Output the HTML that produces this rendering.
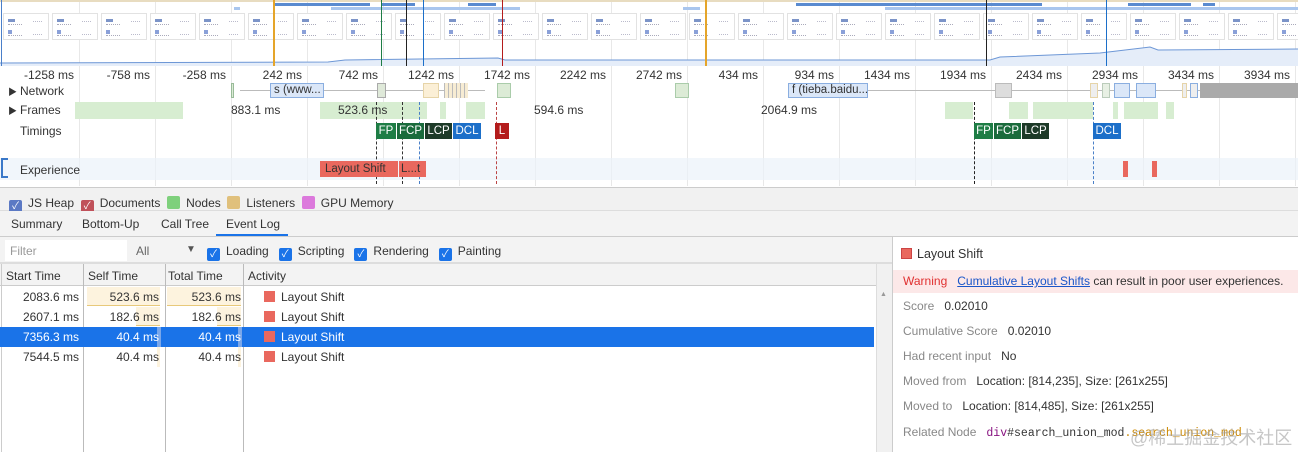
<!DOCTYPE html>
<html><head><meta charset="utf-8"><style>
*{box-sizing:border-box;margin:0;padding:0}
body{width:1298px;height:452px;overflow:hidden;background:#fff;font-family:"Liberation Sans","Noto Sans CJK SC",sans-serif;font-size:12px;color:#333;position:relative}
.a{position:absolute}
.th{position:absolute;top:13px;width:46px;height:27px;border:1px solid #e2e2e2;background:#fff}
.th i{position:absolute;left:4px;top:5px;width:7px;height:3px;background:#7c94c8}
.th b{position:absolute;left:4px;top:10px;width:14px;height:12px;border-top:1px dotted #aab;border-bottom:1px dotted #aab}
.th u{position:absolute;right:6px;top:7px;width:9px;height:14px;border-top:1px dotted #bbc;border-bottom:1px dotted #bbc}
.th s{position:absolute;left:4px;top:16px;width:4px;height:4px;background:#8aa0d8}
.gl{position:absolute;top:0;height:186px;width:1px;background:#e8e8e8}
.rl{position:absolute;top:68px;font-size:12px;color:#333;text-align:right;width:70px}
.mk{position:absolute;top:123px;height:16px;color:#fff;font-size:11.5px;line-height:16px;text-align:center}
.cb{display:inline-block;width:13px;height:13px;border-radius:2px;background:#1a73e8;color:#fff;font-size:10px;line-height:13px;text-align:center;vertical-align:-2px;margin-right:6px}
.row{position:absolute;left:0;width:874px;height:20px;line-height:20px}
.c{position:absolute;top:0;text-align:right}
.sq{position:absolute;left:264px;top:4px;width:11px;height:11px;background:#e9685e}
.k{color:#888}
.nb{position:absolute;top:83px;height:15px}
.fr{position:absolute;top:102px;height:17px;background:#d7edd1}
.dl{position:absolute;top:102px;height:82px}
</style></head><body>
<div id="grid"></div>
<!-- overview -->
<div class="a" style="left:0;top:65px;width:1298px;height:1px;background:#ccc"></div>
<div class="a" style="left:0;top:0;width:1298px;height:2px;background:#e8dcc0"></div>
<div class="a" style="left:274px;top:3px;width:96px;height:3px;background:#5a8bd0"></div>
<div class="a" style="left:381px;top:3px;width:34px;height:3px;background:#5a8bd0"></div>
<div class="a" style="left:468px;top:3px;width:28px;height:3px;background:#5a8bd0"></div>
<div class="a" style="left:796px;top:3px;width:246px;height:3px;background:#5a8bd0"></div>
<div class="a" style="left:1128px;top:3px;width:63px;height:3px;background:#5a8bd0"></div>
<div class="a" style="left:1203px;top:3px;width:12px;height:3px;background:#5a8bd0"></div>
<div class="a" style="left:234px;top:7px;width:6px;height:3px;background:#a9c6ee"></div>
<div class="a" style="left:331px;top:7px;width:189px;height:3px;background:#a9c6ee"></div>
<div class="a" style="left:683px;top:7px;width:17px;height:3px;background:#a9c6ee"></div>
<div class="a" style="left:885px;top:7px;width:413px;height:3px;background:#a9c6ee"></div>
<div id="thumbs"></div>
<svg class="a" style="left:0;top:40px" width="1298" height="26"><path d="M0 23 L328 22 L345 20 L498 18 L505 20 L990 20 L1000 17 L1100 13 L1150 7 L1158 10 L1298 9 L1298 26 L0 26Z" fill="#e5edf9"/><path d="M0 23 L328 22 L345 20 L498 18 L505 20 L990 20 L1000 17 L1100 13 L1150 7 L1158 10 L1298 9" fill="none" stroke="#6d97d6" stroke-width="1"/></svg>
<div class="a" style="left:273px;top:0;width:2px;height:66px;background:#e5a52a"></div>
<div class="a" style="left:705px;top:0;width:2px;height:66px;background:#e5a52a"></div>
<div class="a" style="left:381px;top:0;width:1px;height:66px;background:#1e7d45"></div>
<div class="a" style="left:406px;top:0;width:1px;height:66px;background:#222"></div>
<div class="a" style="left:423px;top:0;width:1px;height:66px;background:#1c6fc9"></div>
<div class="a" style="left:502px;top:0;width:1px;height:66px;background:#b41c1c"></div>
<div class="a" style="left:986px;top:0;width:1px;height:66px;background:#222"></div>
<div class="a" style="left:1106px;top:0;width:1px;height:66px;background:#1c6fc9"></div>
<div class="a" style="left:1px;top:0;width:1px;height:66px;background:#4a7fc9"></div>

<!-- timeline -->
<div class="a" style="left:0;top:158px;width:1298px;height:22px;background:rgba(235,242,250,0.7)"></div>
<div class="a" style="left:1px;top:158px;width:7px;height:20px;border:2px solid #3a78c8;border-right:none"></div>
<div class="a" style="left:8px;top:85px;font-size:9px">▶</div><div class="a" style="left:20px;top:84px">Network</div>
<div class="a" style="left:8px;top:104px;font-size:9px">▶</div><div class="a" style="left:20px;top:103px">Frames</div>
<div class="a" style="left:20px;top:124px">Timings</div>
<div class="a" style="left:20px;top:163px">Experience</div>

<!-- network -->
<div class="a" style="left:240px;top:90px;width:245px;height:1px;background:#bbb"></div>
<div class="a" style="left:868px;top:90px;width:332px;height:1px;background:#bbb"></div>
<div class="nb" style="left:231px;width:3px;background:#dcebd6;border:1px solid #9b9"></div>
<div class="nb" style="left:270px;width:54px;background:#dbe7f8;border:1px solid #8aaee0;font-size:11.5px;line-height:13px;padding-left:3px;overflow:hidden;white-space:nowrap">s (www...</div>
<div class="nb" style="left:377px;width:9px;background:#dfe9d9;border:1px solid #aaa"></div>
<div class="nb" style="left:423px;width:16px;background:#fbefd6;border:1px solid #e6d4a8"></div>
<div class="nb" style="left:444px;width:24px;background:repeating-linear-gradient(90deg,#bbb 0 1px,#f7ecd3 1px 4px)"></div>
<div class="nb" style="left:497px;width:14px;background:#dcebd6;border:1px solid #aca"></div>
<div class="nb" style="left:675px;width:14px;background:#dcebd6;border:1px solid #aca"></div>
<div class="nb" style="left:788px;width:80px;background:#dbe7f8;border:1px solid #8aaee0;font-size:11.5px;line-height:13px;padding-left:3px;overflow:hidden;white-space:nowrap">f (tieba.baidu...</div>
<div class="nb" style="left:995px;width:17px;background:#ddd;border:1px solid #bbb"></div>
<div class="nb" style="left:1090px;width:8px;background:#eee;border:1px solid #e6d4a8"></div>
<div class="nb" style="left:1102px;width:8px;background:#e8f0e4;border:1px solid #bcb"></div>
<div class="nb" style="left:1114px;width:16px;background:#dbe7f8;border:1px solid #8aaee0"></div>
<div class="nb" style="left:1136px;width:20px;background:#dbe7f8;border:1px solid #8aaee0"></div>
<div class="nb" style="left:1182px;width:5px;background:#eee;border:1px solid #e6d4a8"></div>
<div class="nb" style="left:1190px;width:8px;background:#eee;border:1px solid #8aaee0"></div>
<div class="nb" style="left:1200px;width:98px;background:#aaa"></div>
<!-- frames -->
<div class="fr" style="left:75px;width:108px"></div>
<div class="fr" style="left:320px;width:107px"></div>
<div class="fr" style="left:440px;width:6px"></div>
<div class="fr" style="left:466px;width:19px"></div>
<div class="fr" style="left:945px;width:28px"></div>
<div class="fr" style="left:1009px;width:19px"></div>
<div class="fr" style="left:1033px;width:60px"></div>
<div class="fr" style="left:1113px;width:5px"></div>
<div class="fr" style="left:1124px;width:34px"></div>
<div class="fr" style="left:1166px;width:8px"></div>
<div class="a" style="left:231px;top:103px">883.1 ms</div>
<div class="a" style="left:338px;top:103px">523.6 ms</div>
<div class="a" style="left:534px;top:103px">594.6 ms</div>
<div class="a" style="left:761px;top:103px">2064.9 ms</div>
<div class="dl" style="left:376px;border-left:1px dashed #333"></div>
<div class="dl" style="left:402px;border-left:1px dashed #333"></div>
<div class="dl" style="left:419px;border-left:1px dashed #4a80c8"></div>
<div class="dl" style="left:496px;border-left:1px dashed #b44"></div>
<div class="dl" style="left:974px;border-left:1px dashed #222"></div>
<div class="dl" style="left:1093px;border-left:1px dashed #4a80c8"></div>
<div class="mk" style="left:376px;width:20px;background:#1e7d45">FP</div>
<div class="mk" style="left:397px;width:27px;background:#1a6b3c">FCP</div>
<div class="mk" style="left:425px;width:27px;background:#1d3a28">LCP</div>
<div class="mk" style="left:453px;width:28px;background:#1c6fc9">DCL</div>
<div class="mk" style="left:495px;width:14px;background:#b41c1c">L</div>
<div class="mk" style="left:974px;width:19px;background:#1e7d45">FP</div>
<div class="mk" style="left:994px;width:27px;background:#1a6b3c">FCP</div>
<div class="mk" style="left:1022px;width:27px;background:#1d3a28">LCP</div>
<div class="mk" style="left:1093px;width:28px;background:#1c6fc9">DCL</div>
<div class="a" style="left:320px;top:161px;width:78px;height:16px;background:#e9685e;color:#333;font-size:11.5px;line-height:16px;padding-left:5px">Layout Shift</div>
<div class="a" style="left:399px;top:161px;width:27px;height:16px;background:#e9685e;color:#333;font-size:11.5px;line-height:16px;padding-left:2px">L...t</div>
<div class="a" style="left:1123px;top:161px;width:5px;height:16px;background:#e9685e"></div>
<div class="a" style="left:1152px;top:161px;width:5px;height:16px;background:#e9685e"></div>

<!-- memory bar -->
<div class="a" style="left:0;top:187px;width:1298px;height:24px;background:#f1f1f1;border-top:1px solid #ccc;border-bottom:1px solid #ddd"></div>
<div class="a" style="left:9px;top:196px;line-height:14px;color:#333">
<span class="cb" style="background:#5b79c4">✓</span>JS Heap&nbsp;&nbsp;<span class="cb" style="background:#c0515a">✓</span>Documents&nbsp;&nbsp;<span class="cb" style="background:#7ed07c"></span>Nodes&nbsp;&nbsp;<span class="cb" style="background:#e0c07c"></span>Listeners&nbsp;&nbsp;<span class="cb" style="background:#dc79dc"></span>GPU Memory</div>
<!-- tabs -->
<div class="a" style="left:0;top:211px;width:1298px;height:26px;background:#f3f3f3;border-bottom:1px solid #ccc"></div>
<div class="a" style="left:11px;top:217px;color:#333">Summary</div>
<div class="a" style="left:82px;top:217px;color:#333">Bottom-Up</div>
<div class="a" style="left:161px;top:217px;color:#333">Call Tree</div>
<div class="a" style="left:226px;top:217px;color:#333">Event Log</div>
<div class="a" style="left:216px;top:234px;width:72px;height:2px;background:#1a73e8"></div>
<!-- filter row -->
<div class="a" style="left:0;top:237px;width:892px;height:27px;background:#f3f3f3;border-bottom:2px solid #ddd"></div>
<div class="a" style="left:5px;top:240px;width:122px;height:21px;background:#fff;color:#999;padding:4px 5px">Filter</div>
<div class="a" style="left:136px;top:244px;color:#666">All</div>
<div class="a" style="left:186px;top:244px;color:#555;font-size:10px">▼</div>
<div class="a" style="left:207px;top:244px;line-height:14px"><span class="cb">✓</span>Loading&nbsp;&nbsp;&nbsp;<span class="cb">✓</span>Scripting&nbsp;&nbsp;&nbsp;<span class="cb">✓</span>Rendering&nbsp;&nbsp;&nbsp;<span class="cb">✓</span>Painting</div>
<!-- table header -->
<div class="a" style="left:0;top:264px;width:876px;height:22px;background:#f3f3f3;border-bottom:1px solid #ccc"></div>
<div class="a" style="left:6px;top:269px">Start Time</div>
<div class="a" style="left:88px;top:269px">Self Time</div>
<div class="a" style="left:168px;top:269px">Total Time</div>
<div class="a" style="left:248px;top:269px">Activity</div>
<div class="a" style="left:1px;top:264px;width:1px;height:188px;background:#ccc"></div>
<div class="a" style="left:83px;top:264px;width:1px;height:188px;background:#bbb"></div>
<div class="a" style="left:165px;top:264px;width:1px;height:188px;background:#bbb"></div>
<div class="a" style="left:243px;top:264px;width:1px;height:188px;background:#bbb"></div>
<div class="row" style="top:287px"><div class="a" style="left:87px;top:0;width:73px;height:19px;background:#fdf3de;border-bottom:1px solid #e8c97a"></div><div class="a" style="left:167px;top:0;width:74px;height:19px;background:#fdf3de;border-bottom:1px solid #e8c97a"></div>
<div class="c" style="left:0;width:79px">2083.6 ms</div><div class="c" style="left:84px;width:75px">523.6 ms</div><div class="c" style="left:166px;width:75px">523.6 ms</div><div class="sq"></div><div class="a" style="left:281px;top:0">Layout Shift</div></div>
<div class="row" style="top:307px"><div class="a" style="left:136px;top:0;width:24px;height:19px;background:#fdf3de;border-bottom:1px solid #e8c97a"></div><div class="a" style="left:217px;top:0;width:24px;height:19px;background:#fdf3de;border-bottom:1px solid #e8c97a"></div>
<div class="c" style="left:0;width:79px">2607.1 ms</div><div class="c" style="left:84px;width:75px">182.6 ms</div><div class="c" style="left:166px;width:75px">182.6 ms</div><div class="sq"></div><div class="a" style="left:281px;top:0">Layout Shift</div></div>
<div class="row" style="top:327px;background:#1a73e8;color:#fff"><div class="a" style="left:157px;top:0;width:4px;height:20px;background:#7aa7ea"></div><div class="a" style="left:238px;top:0;width:4px;height:20px;background:#7aa7ea"></div>
<div class="c" style="left:0;width:79px">7356.3 ms</div><div class="c" style="left:84px;width:75px">40.4 ms</div><div class="c" style="left:166px;width:75px">40.4 ms</div><div class="sq"></div><div class="a" style="left:281px;top:0">Layout Shift</div></div>
<div class="row" style="top:347px"><div class="a" style="left:157px;top:0;width:3px;height:20px;background:#fdf3de"></div><div class="a" style="left:238px;top:0;width:3px;height:20px;background:#fdf3de"></div>
<div class="c" style="left:0;width:79px">7544.5 ms</div><div class="c" style="left:84px;width:75px">40.4 ms</div><div class="c" style="left:166px;width:75px">40.4 ms</div><div class="sq"></div><div class="a" style="left:281px;top:0">Layout Shift</div></div>
<div class="a" style="left:876px;top:264px;width:16px;height:188px;background:#f1f1f1;border-left:1px solid #ddd"></div>
<div class="a" style="left:880px;top:291px;font-size:7px;color:#999">▲</div>
<!-- right panel -->
<div class="a" style="left:892px;top:237px;width:406px;height:215px;background:#fff;border-left:1px solid #ccc"></div>
<div class="a" style="left:901px;top:248px;width:11px;height:11px;background:#e9685e;border:1px solid #c44"></div>
<div class="a" style="left:917px;top:247px;font-size:12.5px">Layout Shift</div>
<div class="a" style="left:893px;top:270px;width:405px;height:23px;background:#fce8e8"></div>
<div class="a" style="left:903px;top:274px"><span style="color:#e03030">Warning</span>&nbsp;&nbsp;&nbsp;<span style="color:#1a56c9;text-decoration:underline">Cumulative Layout Shifts</span> can result in poor user experiences.</div>
<div class="a" style="left:903px;top:299px"><span class="k">Score</span>&nbsp;&nbsp;&nbsp;0.02010</div>
<div class="a" style="left:903px;top:324px"><span class="k">Cumulative Score</span>&nbsp;&nbsp;&nbsp;0.02010</div>
<div class="a" style="left:903px;top:349px"><span class="k">Had recent input</span>&nbsp;&nbsp;&nbsp;No</div>
<div class="a" style="left:903px;top:374px"><span class="k">Moved from</span>&nbsp;&nbsp;&nbsp;Location: [814,235], Size: [261x255]</div>
<div class="a" style="left:903px;top:399px"><span class="k">Moved to</span>&nbsp;&nbsp;&nbsp;Location: [814,485], Size: [261x255]</div>
<div class="a" style="left:903px;top:425px"><span class="k">Related Node</span>&nbsp;&nbsp;&nbsp;<span style="font-family:'Liberation Mono',monospace;font-size:11.5px"><span style="color:#881280">div</span>#search_union_mod<span style="color:#c80">.search_union_mod</span></span></div>
<div class="a" style="left:1130px;top:424px;font-size:18px;color:rgba(160,160,160,0.6)">@稀土掘金技术社区</div>
<script>
var t='';for(var i=0;i<27;i++){t+='<div class="th" style="left:'+(3+i*49)+'px"><i></i><b></b><u></u><s></s></div>';}
document.getElementById('thumbs').innerHTML=t;
var g='';
var labs=['-1258 ms','-758 ms','-258 ms','242 ms','742 ms','1242 ms','1742 ms','2242 ms','2742 ms','434 ms','934 ms','1434 ms','1934 ms','2434 ms','2934 ms','3434 ms','3934 ms'];
for(var k=0;k<labs.length;k++){var r=74+76*k;g+='<div class="gl" style="left:'+(r+5)+'px"></div><div class="rl" style="left:'+(r-70)+'px">'+labs[k]+'</div>';}
document.getElementById('grid').innerHTML=g;
</script>
</body></html>
